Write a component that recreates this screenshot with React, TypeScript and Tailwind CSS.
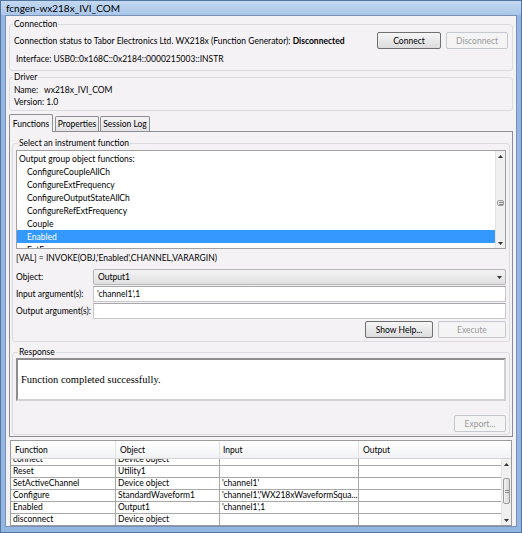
import React from "react";

const ui = "font-['Lato','Open_Sans',sans-serif]";

type BtnProps = { label: string; disabled?: boolean; w: string };

const Btn = ({ label, disabled, w }: BtnProps) => (
  <div
    className={`${w} h-[17px] flex items-center justify-center rounded-[2px] border ${
      disabled
        ? "border-[#c5c8cc] bg-[#f4f4f4] text-[#9a9a9a]"
        : "border-[#707070] bg-gradient-to-b from-[#f6f6f6] to-[#dcdcdc] text-black"
    }`}
  >
    {label}
  </div>
);

const Arrow = ({ up }: { up?: boolean }) => (
  <svg width="5" height="3" viewBox="0 0 5 3">
    {up ? <path d="M0 3 L2.5 0 L5 3 Z" fill="#333" /> : <path d="M0 0 L2.5 3 L5 0 Z" fill="#333" />}
  </svg>
);

const VScroll = ({ thumbTop, thumbH }: { thumbTop: string; thumbH: string }) => (
  <div className="w-[10px] h-full flex flex-col bg-[#f0f0f0] border-l border-[#e4e4e4]">
    <div className="h-[10px] flex items-center justify-center">
      <Arrow up />
    </div>
    <div className="flex-1 flex flex-col">
      <div className={thumbTop} />
      <div className={`${thumbH} mx-[1px] rounded-[2px] border border-[#9c9c9c] bg-gradient-to-r from-[#f2f2f2] to-[#d8d8d8] flex items-center justify-center`}>
        <div className="w-[4px] h-[3px] border-y border-[#8a8a8a]" />
      </div>
    </div>
    <div className="h-[10px] flex items-center justify-center">
      <Arrow />
    </div>
  </div>
);

const functions = [
  "ConfigureCoupleAllCh",
  "ConfigureExtFrequency",
  "ConfigureOutputStateAllCh",
  "ConfigureRefExtFrequency",
  "Couple",
  "Enabled",
  "ExtFrequency",
];

const history = [
  { fn: "connect", obj: "Device object", input: "", output: "" },
  { fn: "Reset", obj: "Utility1", input: "", output: "" },
  { fn: "SetActiveChannel", obj: "Device object", input: "'channel1'", output: "" },
  { fn: "Configure", obj: "StandardWaveform1", input: "'channel1','WX218xWaveformSqua...", output: "" },
  { fn: "Enabled", obj: "Output1", input: "'channel1',1", output: "" },
  { fn: "disconnect", obj: "Device object", input: "", output: "" },
];

export default function App() {
  return (
    <div className={`${ui} w-[522px] h-[533px] flex flex-col bg-[#93b6e2] border border-[#52769f] text-[8.5px] leading-[12px] text-black whitespace-nowrap`}>
      {/* title bar */}
      <div className="h-[16px] flex items-center px-[5px] bg-gradient-to-b from-[#c4d9f1] to-[#a9c6e9] text-[10px]">
        fcngen-wx218x_IVI_COM
      </div>

      <div className="flex-1 mx-[4px] mb-[5px] bg-[#f4f2f5] border border-[#7790b3] px-[3px] pt-[2px] flex flex-col">
        {/* connection */}
        <fieldset className="border border-[#dcdbe0] rounded-[3px] px-[4px] pb-[5px]">
          <legend className="px-[1px] -ml-[1px]">Connection</legend>
          <div className="flex items-center mt-[2px]">
            <div className="flex-1">
              Connection status to Tabor Electronics Ltd. WX218x (Function Generator):{" "}
              <span className="font-bold">Disconnected</span>
            </div>
            <div className="flex gap-[5px]">
              <Btn label="Connect" w="w-[64px]" />
              <Btn label="Disconnect" disabled w="w-[62px]" />
            </div>
          </div>
          <div className="mt-[4px] ml-[2px]">Interface: USB0::0x168C::0x2184::0000215003::INSTR</div>
        </fieldset>

        {/* driver */}
        <fieldset className="border border-[#dcdbe0] rounded-[3px] px-[4px] pb-[2px]">
          <legend className="px-[1px] -ml-[1px]">Driver</legend>
          <div className="mt-[1px] flex">
            <span className="w-[30px]">Name:</span>
            <span>wx218x_IVI_COM</span>
          </div>
          <div>Version: 1.0</div>
        </fieldset>

        {/* tabs */}
        <div className="mt-[2px] flex items-end h-[18px]">
          <div className="h-[18px] w-[44px] flex items-center justify-center bg-[#f4f2f5] border border-b-0 border-[#8c8e94] rounded-t-[2px] relative z-10 -mb-[1px]">
            Functions
          </div>
          <div className="h-[15px] w-[44px] ml-[2px] flex items-center justify-center bg-gradient-to-b from-[#f4f4f4] to-[#e2e2e6] border border-b-0 border-[#8c8e94] rounded-t-[2px]">
            Properties
          </div>
          <div className="h-[15px] w-[50px] ml-[1px] flex items-center justify-center bg-gradient-to-b from-[#f4f4f4] to-[#e2e2e6] border border-b-0 border-[#8c8e94] rounded-t-[2px]">
            Session Log
          </div>
        </div>
        <div className="h-[306px] border border-[#8c8e94] px-[2px] pt-[5px]">
          {/* select function */}
          <fieldset className="border border-[#dcdbe0] rounded-[3px] px-[3px] pb-[3px]">
            <legend className="px-[1px] ml-[2px]">Select an instrument function</legend>
            <div className="h-[99px] border border-[#a0a0a0] bg-white flex mt-[1px]">
              <div className="flex-1 overflow-hidden pt-[1px]">
                <div className="h-[13px] pl-[2px] flex items-center">Output group object functions:</div>
                {functions.map((f) => (
                  <div
                    key={f}
                    className={`h-[13px] pl-[10px] flex items-center ${f === "Enabled" ? "bg-[#3399ff] text-white" : ""}`}
                  >
                    {f}
                  </div>
                ))}
              </div>
              <VScroll thumbTop="h-[39px]" thumbH="h-[6px]" />
            </div>
            <div className="mt-[3px] h-[12px] flex items-center">[VAL] = INVOKE(OBJ,'Enabled',CHANNEL,VARARGIN)</div>
            <div className="mt-[5px] flex items-center h-[16px]">
              <span className="w-[77px]">Object:</span>
              <div className="flex-1 h-[16px] border border-[#b5b5b5] rounded-[2px] bg-gradient-to-b from-[#f4f4f4] to-[#e0e0e0] flex items-center pl-[4px]">
                <span className="flex-1">Output1</span>
                <span className="w-[12px] flex justify-center">
                  <Arrow />
                </span>
              </div>
            </div>
            <div className="mt-[1px] flex items-center h-[16px]">
              <span className="w-[77px]">Input argument(s):</span>
              <div className="flex-1 h-[16px] border border-[#c8c8cc] border-t-[#a8a8ac] bg-white flex items-center pl-[3px]">'channel1',1</div>
            </div>
            <div className="mt-[1px] flex items-center h-[16px]">
              <span className="w-[77px]">Output argument(s):</span>
              <div className="flex-1 h-[16px] border border-[#c8c8cc] border-t-[#a8a8ac] bg-white" />
            </div>
            <div className="mt-[2px] flex justify-end gap-[5px]">
              <Btn label="Show Help..." w="w-[68px]" />
              <Btn label="Execute" disabled w="w-[68px]" />
            </div>
          </fieldset>

          {/* response */}
          <fieldset className="mt-[4px] border border-[#dcdbe0] rounded-[3px] px-[3px] pb-[2px]">
            <legend className="px-[1px] ml-[2px]">Response</legend>
            <div className="h-[43px] border-2 border-[#8e8e8e] border-b-[#d0d0d0] border-r-[#d0d0d0] bg-white flex items-center pl-[3px] font-['Liberation_Serif',serif] text-[10.5px]">
              Function completed successfully.
            </div>
            <div className="mt-[14px] flex justify-end">
              <Btn label="Export..." disabled w="w-[52px]" />
            </div>
          </fieldset>
        </div>

        {/* history table */}
        <div className="mt-[3px] mx-[1px] h-[86px] border border-[#9a9a9a] bg-white flex flex-col">
          <div className="h-[18px] flex bg-gradient-to-b from-white to-[#f1f2f4] border-b border-[#d5d5d5] pr-[12px]">
            <div className="w-[105px] pl-[4px] flex items-center border-r border-[#e3e3e3]">Function</div>
            <div className="w-[104px] pl-[4px] flex items-center border-r border-[#e3e3e3]">Object</div>
            <div className="w-[139px] pl-[3px] flex items-center border-r border-[#e3e3e3]">Input</div>
            <div className="flex-1 pl-[4px] flex items-center">Output</div>
          </div>
          <div className="flex-1 flex overflow-hidden">
            <div className="flex-1 overflow-hidden">
              <div className="-mt-[5px]">
                {history.map((r) => (
                  <div key={r.fn} className="h-[12px] flex border-b border-[#a8a8a8] leading-[11px]">
                    <div className="w-[105px] pl-[2px] border-r border-[#a8a8a8] overflow-hidden">{r.fn}</div>
                    <div className="w-[104px] pl-[2px] border-r border-[#a8a8a8] overflow-hidden">{r.obj}</div>
                    <div className="w-[139px] pl-[2px] border-r border-[#a8a8a8] overflow-hidden">{r.input}</div>
                    <div className="flex-1">{r.output}</div>
                  </div>
                ))}
              </div>
            </div>
            <VScroll thumbTop="h-[9px]" thumbH="h-[26px]" />
          </div>
        </div>
      </div>
    </div>
  );
}
